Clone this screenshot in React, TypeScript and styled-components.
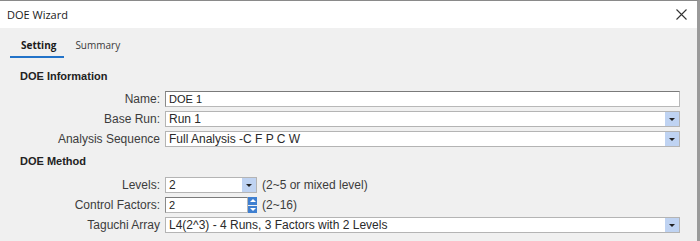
import { FC } from 'react'
import styled, { createGlobalStyle } from 'styled-components'

const GlobalStyle = createGlobalStyle`
  html, body {
    margin: 0;
    padding: 0;
    background: #ffffff;
  }
`

const Window = styled.div`
  width: 700px;
  height: 241px;
  box-sizing: border-box;
  border-top: 1px solid #8a8a8a;
  border-right: 3px solid #9a9a9a;
  display: flex;
  flex-direction: column;
  overflow: hidden;
  font-family: 'Liberation Sans', Arial, sans-serif;
`

const TitleBar = styled.div`
  height: 27px;
  flex: none;
  background: #ffffff;
  display: flex;
  align-items: center;
  justify-content: space-between;
  padding: 0 8px 0 7px;
  font-family: 'Open Sans', 'Noto Sans', sans-serif;
  font-size: 11px;
  color: #1a1a1a;
`

const CloseIcon = styled.svg`
  width: 11px;
  height: 11px;
  margin-right: 2px;
`

const Body = styled.div`
  flex: 1;
  background: #f0f0f0;
  padding-right: 17px;
`

const TabBar = styled.div`
  height: 30px;
  display: flex;
  align-items: flex-end;
  padding-left: 10px;
`

const Tab = styled.div<{ $active?: boolean }>`
  height: 18px;
  padding: 0 8px 0 11px;
  font-family: 'Open Sans', 'Noto Sans', sans-serif;
  font-size: 10px;
  font-weight: ${p => (p.$active ? 700 : 400)};
  color: ${p => (p.$active ? '#1a1a1a' : '#3a3a3a')};
  border-bottom: 2px solid ${p => (p.$active ? '#2273c9' : 'transparent')};
  line-height: 14px;
`

const SectionHeading = styled.div<{ $top: number; $bottom: number }>`
  height: 14px;
  line-height: 14px;
  margin: ${p => p.$top}px 0 ${p => p.$bottom}px 20px;
  font-size: 11px;
  font-weight: 700;
  color: #222222;
`

const Rows = styled.div`
  display: flex;
  flex-direction: column;
  gap: 4px;
`

const Row = styled.div`
  display: grid;
  grid-template-columns: 160px 1fr;
  column-gap: 5px;
  align-items: center;
  height: 16px;
`

const Label = styled.div`
  text-align: right;
  font-size: 12px;
  color: #3c3c3c;
`

const Inline = styled.div`
  display: flex;
  align-items: center;
  gap: 5px;
  height: 16px;
`

const Hint = styled.span`
  font-size: 12px;
  color: #3c3c3c;
`

const TextField = styled.div<{ $width?: number }>`
  box-sizing: border-box;
  height: 16px;
  width: ${p => (p.$width ? `${p.$width}px` : '100%')};
  background: #ffffff;
  border: 1px solid #b8b8b8;
  border-top-color: #7a7a7a;
  border-left-color: #8a8a8a;
  display: flex;
  align-items: center;
  padding-left: 3px;
  font-size: 11px;
  color: #222222;
`

const Combo = styled.div<{ $width?: number }>`
  box-sizing: border-box;
  height: 16px;
  width: ${p => (p.$width ? `${p.$width}px` : '100%')};
  background: #ffffff;
  border: 1px solid #b4b4b4;
  display: flex;
  align-items: stretch;
`

const ComboText = styled.div`
  flex: 1;
  display: flex;
  align-items: center;
  padding-left: 3px;
  font-size: 12px;
  color: #2a2a2a;
  white-space: nowrap;
  overflow: hidden;
`

const ArrowButton = styled.div`
  width: 14px;
  background: #bfd3f2;
  display: flex;
  align-items: center;
  justify-content: center;
`

const Triangle = styled.div<{ $up?: boolean; $color?: string }>`
  width: 0;
  height: 0;
  border-left: 3px solid transparent;
  border-right: 3px solid transparent;
  ${p =>
    p.$up
      ? `border-bottom: 3px solid ${p.$color ?? '#222'};`
      : `border-top: 3px solid ${p.$color ?? '#222'};`}
`

const Spinner = styled.div`
  display: flex;
  align-items: stretch;
  height: 16px;
  width: 92px;
`

const SpinButtons = styled.div`
  width: 10px;
  display: flex;
  flex-direction: column;
  gap: 1px;
`

const SpinButton = styled.div`
  flex: 1;
  background: #3f7fd0;
  display: flex;
  align-items: center;
  justify-content: center;
`

const ComboBox: FC<{ value: string; width?: number }> = ({ value, width }) => (
  <Combo $width={width}>
    <ComboText>{value}</ComboText>
    <ArrowButton>
      <Triangle />
    </ArrowButton>
  </Combo>
)

export default function App() {
  return (
    <>
      <GlobalStyle />
      <Window>
        <TitleBar>
          <span>DOE Wizard</span>
          <CloseIcon viewBox="0 0 11 11">
            <path d="M0.5 0.5 L10.5 10.5 M10.5 0.5 L0.5 10.5" stroke="#333" strokeWidth="1.1" fill="none" />
          </CloseIcon>
        </TitleBar>
        <Body>
          <TabBar>
            <Tab $active>Setting</Tab>
            <Tab>Summary</Tab>
          </TabBar>

          <SectionHeading $top={11} $bottom={8}>DOE Information</SectionHeading>
          <Rows>
            <Row>
              <Label>Name:</Label>
              <TextField>DOE 1</TextField>
            </Row>
            <Row>
              <Label>Base Run:</Label>
              <ComboBox value="Run 1" />
            </Row>
            <Row>
              <Label>Analysis Sequence</Label>
              <ComboBox value="Full Analysis -C F P C W" />
            </Row>
          </Rows>

          <SectionHeading $top={7} $bottom={9}>DOE Method</SectionHeading>
          <Rows>
            <Row>
              <Label>Levels:</Label>
              <Inline>
                <ComboBox value="2" width={92} />
                <Hint>(2~5 or mixed level)</Hint>
              </Inline>
            </Row>
            <Row>
              <Label>Control Factors:</Label>
              <Inline>
                <Spinner>
                  <TextField>2</TextField>
                  <SpinButtons>
                    <SpinButton>
                      <Triangle $up $color="#ffffff" />
                    </SpinButton>
                    <SpinButton>
                      <Triangle $color="#ffffff" />
                    </SpinButton>
                  </SpinButtons>
                </Spinner>
                <Hint>(2~16)</Hint>
              </Inline>
            </Row>
            <Row>
              <Label>Taguchi Array</Label>
              <ComboBox value="L4(2^3) - 4 Runs, 3 Factors with 2 Levels" />
            </Row>
          </Rows>
        </Body>
      </Window>
    </>
  )
}
